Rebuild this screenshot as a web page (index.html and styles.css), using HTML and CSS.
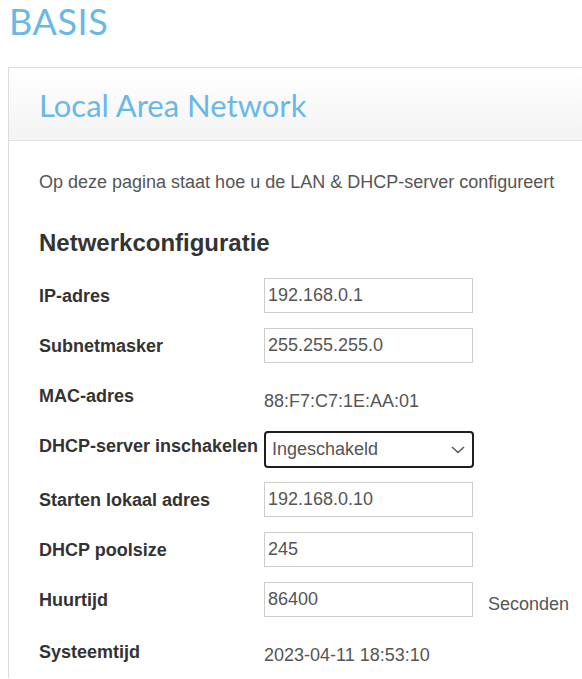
FILE: index.html
```html
<!DOCTYPE html>
<html lang="nl">
<head>
<meta charset="utf-8">
<title>BASIS - Local Area Network</title>
<link rel="stylesheet" href="styles.css">
</head>
<body>
<div class="page">
  <h1 class="brand">BASIS</h1>
  <div class="panel">
    <div class="panel-head">
      <h2 class="panel-title">Local Area Network</h2>
    </div>
    <div class="panel-body">
      <p class="intro">Op deze pagina staat hoe u de LAN &amp; DHCP-server configureert</p>
      <h3 class="section-title">Netwerkconfiguratie</h3>
      <div class="form">
        <div class="row">
          <label class="label" for="ip">IP-adres</label>
          <input class="field" id="ip" type="text" value="192.168.0.1">
        </div>
        <div class="row">
          <label class="label" for="mask">Subnetmasker</label>
          <input class="field" id="mask" type="text" value="255.255.255.0">
        </div>
        <div class="row">
          <span class="label">MAC-adres</span>
          <span class="value">88:F7:C7:1E:AA:01</span>
        </div>
        <div class="row row-select">
          <label class="label" for="dhcp">DHCP-server inschakelen</label>
          <div class="select" id="dhcp">
            <span class="select-text">Ingeschakeld</span>
            <svg class="chev" width="14" height="8" viewBox="0 0 14 8"><path d="M1 1l6 5.5L13 1" fill="none" stroke="#555" stroke-width="1.5"/></svg>
          </div>
        </div>
        <div class="row">
          <label class="label" for="start">Starten lokaal adres</label>
          <input class="field" id="start" type="text" value="192.168.0.10">
        </div>
        <div class="row">
          <label class="label" for="pool">DHCP poolsize</label>
          <input class="field" id="pool" type="text" value="245">
        </div>
        <div class="row">
          <label class="label" for="lease">Huurtijd</label>
          <input class="field" id="lease" type="text" value="86400">
          <span class="unit">Seconden</span>
        </div>
        <div class="row row-last">
          <span class="label label-sys">Systeemtijd</span>
          <span class="value">2023-04-11 18:53:10</span>
        </div>
      </div>
    </div>
  </div>
</div>
</body>
</html>
```

FILE: styles.css
```css
html, body {
  margin: 0;
  padding: 0;
  overflow: hidden;
  background: #fff;
}

.page {
  padding: 3px 0 0 8px;
  font-family: "Liberation Sans", Arial, sans-serif;
}

.brand {
  margin: 0 0 0 1px;
  font-family: Lato, "Open Sans", sans-serif;
  font-weight: 400;
  font-size: 36px;
  line-height: 36px;
  color: #6ab8e6;
  letter-spacing: 0.6px;
}

.panel {
  margin-top: 28px;
  border: 1px solid #dcdcdc;
  border-right: none;
  border-bottom: none;
}

.panel-head {
  height: 73px;
  box-sizing: border-box;
  padding: 2px 0 0 30px;
  display: flex;
  align-items: center;
  background: linear-gradient(#ffffff, #f3f3f3);
  border-bottom: 1px solid #e4e4e4;
}

.panel-title {
  margin: 0;
  font-family: Lato, "Open Sans", sans-serif;
  font-weight: 400;
  font-size: 31px;
  color: #6ab8e6;
}

.panel-body {
  padding: 29px 0 0 30px;
}

.intro {
  margin: 0;
  font-size: 18px;
  line-height: 24px;
  color: #555;
}

.section-title {
  margin: 35px 0 0;
  font-size: 24px;
  line-height: 28px;
  font-weight: 700;
  color: #333;
}

.form {
  margin-top: 21px;
  display: flex;
  flex-direction: column;
}

.row {
  height: 50px;
  display: flex;
  align-items: flex-start;
}

.row-select {
  height: 54px;
}

.row-last {
  height: 46px;
}

.label {
  width: 225px;
  padding-top: 8px;
  font-size: 18px;
  line-height: 20px;
  font-weight: 700;
  color: #333;
}

.label-sys {
  padding-top: 10px;
}

.field {
  box-sizing: border-box;
  width: 209px;
  height: 35px;
  margin: 0;
  padding: 0 3px;
  border: 1px solid #ccc;
  border-radius: 0;
  font-family: "Liberation Sans", Arial, sans-serif;
  font-size: 18px;
  color: #555;
  background: #fff;
  outline: none;
}

.value {
  padding-top: 13px;
  font-size: 18px;
  line-height: 20px;
  color: #555;
}

.unit {
  margin-left: 15px;
  padding-top: 12px;
  font-size: 18px;
  line-height: 20px;
  color: #555;
}

.select {
  box-sizing: border-box;
  width: 210px;
  height: 37px;
  margin-top: 3px;
  padding: 0 7px 0 6px;
  border: 2px solid #1e1e1e;
  border-radius: 4px;
  display: flex;
  align-items: center;
  justify-content: space-between;
}

.select-text {
  font-size: 18px;
  color: #555;
}

.chev {
  display: block;
}
```
